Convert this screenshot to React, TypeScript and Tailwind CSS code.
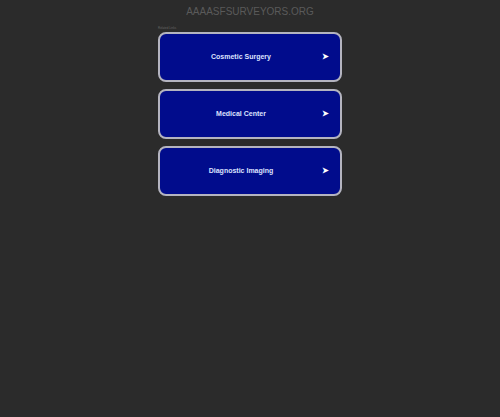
import React from 'react';

const links = ['Cosmetic Surgery', 'Medical Center', 'Diagnostic Imaging'];

const App = () => {
  return (
    <div className="min-h-[417px] w-full bg-[#2b2b2b]" style={{ fontFamily: '"Liberation Sans", Arial, sans-serif' }}>
      <div className="pt-[6px] text-center text-[10px] leading-[12px] text-[#5a5a5a]">AAAASFSURVEYORS.ORG</div>
      <div className="mx-auto mt-[8px] w-[184px]">
        <div className="text-[3px] leading-[4px] text-[#666]">Related Links</div>
        <div className="mt-[2px] flex flex-col gap-[7px]">
          {links.map((label) => (
            <a
              key={label}
              className="flex h-[50px] items-center rounded-[8px] border-2 border-[#b4b4c0] bg-[#010c8c] pr-[11px] text-[7px] font-bold text-[#dde2ff]"
            >
              <span className="flex-1 text-center">{label}</span>
              <span className="text-[8px] text-white">➤</span>
            </a>
          ))}
        </div>
      </div>
    </div>
  );
};

export default App;
